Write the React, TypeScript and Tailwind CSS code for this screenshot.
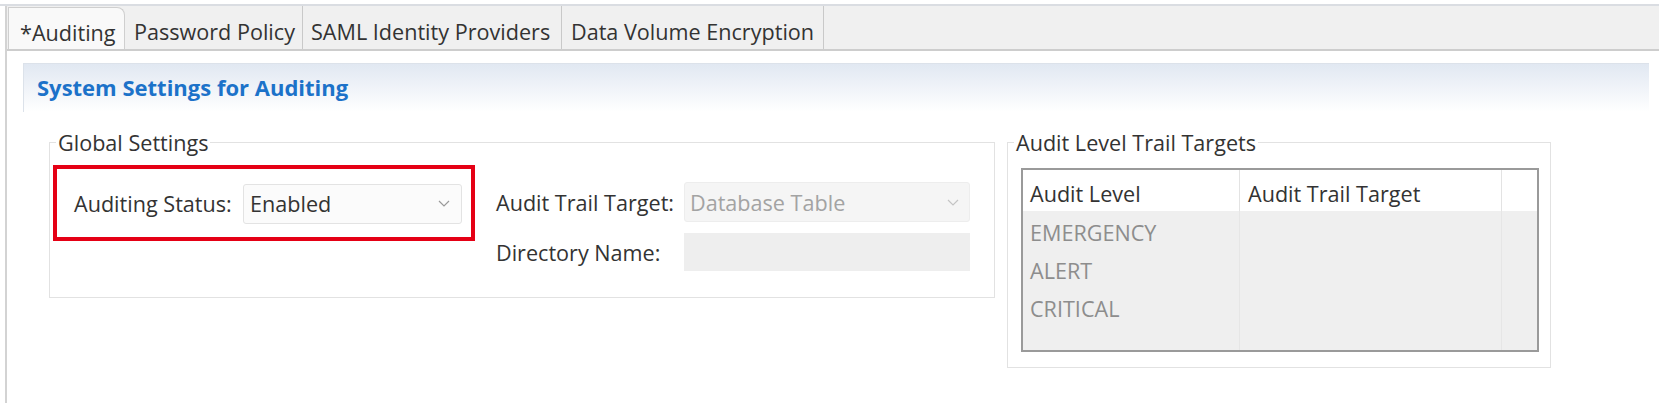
import React from "react";

function Chevron({ color }: { color: string }) {
  return (
    <svg width="12" height="7" viewBox="0 0 12 7" fill="none">
      <polyline points="1,1 6,6 11,1" stroke={color} strokeWidth="1.2" />
    </svg>
  );
}

export default function App() {
  return (
    <div className="w-[1659px] h-[403px] bg-white overflow-hidden text-[#333] [font-family:'Open_Sans',sans-serif] text-[21.6px] leading-[29px]">
      <div className="mt-[4px] h-[399px] border-t-2 border-[#dadde2]">
        <div className="ml-[5px] h-full border-l-2 border-[#d3d3d3] flex flex-col">
          {/* tab bar */}
          <div className="h-[45px] bg-[#f0f0f0] border-b-2 border-[#cdcdcd] flex items-stretch">
            <div className="ml-[1px] mt-[1px] w-[117px] bg-[#f9f9f9] border-l border-t border-r border-[#cfcfcf] rounded-tr-[8px] pl-[11px] pt-[10px] whitespace-nowrap">
              *Auditing
            </div>
            <div className="w-[178px] border-r border-[#c9c9c9] pl-[9px] pt-[11px] whitespace-nowrap">
              Password Policy
            </div>
            <div className="w-[259px] border-r border-[#c9c9c9] pl-[8px] pt-[11px] whitespace-nowrap">
              SAML Identity Providers
            </div>
            <div className="w-[262px] border-r border-[#c9c9c9] pl-[9px] pt-[11px] whitespace-nowrap">
              Data Volume Encryption
            </div>
          </div>

          {/* section header */}
          <div className="mt-[12px] ml-[16px] mr-[10px] h-[49px] border-t border-l border-[#dce2ea] bg-gradient-to-b from-[#e1e8f2] to-white pl-[13px] pt-[9px]">
            <span className="font-bold text-[22px] text-[#1c72c9]">System Settings for Auditing</span>
          </div>

          {/* groups */}
          <div className="mt-[16px] ml-[42px] flex items-start">
            <fieldset className="w-[946px] border border-[#e2e2e2] m-0 p-0">
              <legend className="ml-[6px] px-[2px]">Global Settings</legend>
              <div className="flex items-start pl-[3px] pt-[8px] pb-[26px]">
                <div className="w-[422px] h-[76px] border-4 border-[#e50015] flex items-center pl-[17px] pr-[9px] pt-[1px]">
                  <span className="whitespace-nowrap">Auditing Status:</span>
                  <div className="ml-auto w-[219px] h-[40px] bg-[#fbfbfb] border border-[#e3e3e3] rounded-[3px] flex items-center justify-between pl-[6px] pr-[11px]">
                    <span>Enabled</span>
                    <Chevron color="#9a9a9a" />
                  </div>
                </div>
                <div className="ml-[21px] mt-[17px] grid grid-cols-[188px_286px] gap-y-[11px]">
                  <div className="h-[40px] flex items-center whitespace-nowrap">Audit Trail Target:</div>
                  <div className="h-[40px] bg-[#f5f5f5] border border-[#ededed] rounded-[3px] flex items-center justify-between pl-[5px] pr-[10px] text-[#a3a3a3]">
                    <span>Database Table</span>
                    <Chevron color="#c4c4c4" />
                  </div>
                  <div className="h-[38px] flex items-center whitespace-nowrap">Directory Name:</div>
                  <div className="h-[38px] bg-[#eeeeee]" />
                </div>
              </div>
            </fieldset>

            <fieldset className="ml-[12px] w-[544px] border border-[#e2e2e2] m-0 p-0">
              <legend className="ml-[6px] px-[2px]">Audit Level Trail Targets</legend>
              <div className="pl-[13px] pr-[11px] pt-[11px] pb-[15px]">
                <div className="h-[184px] border-2 border-[#9a9a9a] bg-[#efefef] flex flex-col">
                  <div className="h-[41px] bg-white flex">
                    <div className="w-[217px] border-r border-[#e3e3e3] pl-[7px] pt-[9px]">Audit Level</div>
                    <div className="w-[262px] border-r border-[#e3e3e3] pl-[8px] pt-[9px]">Audit Trail Target</div>
                    <div className="flex-1" />
                  </div>
                  <div className="flex-1 flex text-[#8d8d8d]">
                    <div className="w-[217px] border-r border-[#e6e6e6] pl-[7px] pt-[2px] flex flex-col">
                      <div className="h-[38px] flex items-center">EMERGENCY</div>
                      <div className="h-[38px] flex items-center">ALERT</div>
                      <div className="h-[38px] flex items-center">CRITICAL</div>
                    </div>
                    <div className="w-[262px] border-r border-[#e6e6e6]" />
                    <div className="flex-1" />
                  </div>
                </div>
              </div>
            </fieldset>
          </div>
        </div>
      </div>
    </div>
  );
}
